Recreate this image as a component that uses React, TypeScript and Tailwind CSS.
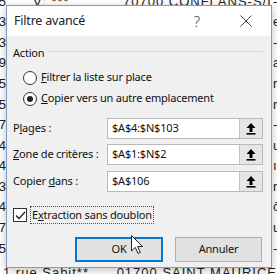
import React from 'react';

const rows = [
  { left: '35', mid: 'V: ***', mid2: '70700 CONFLANS-S/L', right: '-c' },
  { left: '53', mid: '', mid2: '', right: 'ef' },
  { left: '93', mid: '', mid2: '', right: '-c' },
  { left: '39', mid: '', mid2: '', right: 'a' },
  { left: '65', mid: '', mid2: '', right: 'r' },
  { left: '45', mid: '', mid2: '', right: 'r:' },
  { left: '17', mid: '', mid2: '', right: '-c' },
  { left: '24', mid: '', mid2: '', right: 'u' },
  { left: '14', mid: '', mid2: '', right: 'ır' },
  { left: '23', mid: '', mid2: '', right: 'r' },
  { left: '74', mid: '', mid2: '', right: 'ô' },
  { left: '67', mid: '', mid2: '', right: 'u' },
  { left: '15', mid: '', mid2: '', right: '-c' },
];

const UpButton = () => (
  <div className="w-[23px] h-full bg-[#e6e6e6] border-l border-[#c4c4c4] flex items-center justify-center">
    <svg width="10" height="12" viewBox="0 0 10 12">
      <path d="M5 0 L9.5 5 L6.5 5 L6.5 9 L3.5 9 L3.5 5 L0.5 5 Z" fill="#000" />
      <rect x="0.5" y="10" width="9" height="1.6" fill="#000" />
    </svg>
  </div>
);

const Field = ({ label, value, className }: { label: React.ReactNode; value: string; className?: string }) => (
  <div className={`flex items-center h-[21px] ${className ?? ''}`}>
    <div className="w-[94px] shrink-0">{label}</div>
    <div className="flex-1 h-full flex bg-white border border-[#b9b9b9]">
      <div className="flex-1 flex items-center pl-[4px]">{value}</div>
      <UpButton />
    </div>
  </div>
);

const Radio = ({ checked, children }: { checked?: boolean; children: React.ReactNode }) => (
  <div className="flex items-center h-[21px] pl-[10px]">
    <div className="w-[14px] h-[14px] rounded-full border border-[#333] bg-white flex items-center justify-center">
      {checked && <div className="w-[6px] h-[6px] rounded-full bg-[#222]" />}
    </div>
    <span className="ml-[4px]">{children}</span>
  </div>
);

export default function App() {
  return (
    <div className="relative w-[277px] h-[274px] overflow-hidden bg-white" style={{ fontFamily: '"Liberation Sans", Arial, sans-serif' }}>
      {/* spreadsheet behind */}
      <div className="flex flex-col -mt-[9px] text-[13px] text-[#222]">
        {rows.map((r, i) => (
          <div key={i} className="h-[20.6px] flex items-center whitespace-nowrap">
            <div className="w-[6px] overflow-hidden flex justify-end"><span>{r.left}</span></div>
            <div className="w-[117px] pl-[27px] tracking-[1px]">{r.mid}</div>
            <div className="w-[149px] overflow-hidden tracking-[1px]">{r.mid2}</div>
            <div className="w-[5px] overflow-hidden pl-[1px]">{r.right}</div>
          </div>
        ))}
        <div className="h-[20.6px] pt-[7px] flex items-center whitespace-nowrap">
          <div className="w-[123px] pl-[3px] tracking-[1px]">1 rue Sabit**</div>
          <div className="tracking-[1px]">01700 SAINT MAURICE</div>
        </div>
      </div>

      {/* dialog window */}
      <div
        className="absolute left-[6px] top-[5px] w-[266px] h-[263px] border border-[#7f9dc4] bg-[#f0f0f0] shadow-[0_2px_8px_rgba(0,0,0,0.25)] flex flex-col text-[11px] tracking-[-0.2px] text-[#111]"
        style={{ fontFamily: '"Noto Sans", "Segoe UI", sans-serif' }}
      >
        <div className="h-[30px] bg-white flex items-center shrink-0">
          <span className="pl-[7px] text-[12.5px] text-[#222]">Filtre avancé</span>
          <span className="ml-auto mr-[40px] text-[15px] font-light text-[#444]">?</span>
          <svg className="mr-[19px]" width="12" height="12" viewBox="0 0 12 12">
            <path d="M0.5 0.5 L11.5 11.5 M11.5 0.5 L0.5 11.5" stroke="#444" strokeWidth="1" />
          </svg>
        </div>

        <div className="flex-1 flex flex-col pl-[6px] pr-[8px] pt-[8px]">
          <div className="h-[18px] flex items-center">
            <span>Action</span>
            <div className="flex-1 h-px bg-[#d5d5d5] ml-[4px] -mt-[3px]" />
          </div>
          <div className="mt-[5px]">
            <Radio><span className="underline">F</span>iltrer la liste sur place</Radio>
            <Radio checked><span className="underline">C</span>opier vers un autre emplacement</Radio>
          </div>

          <Field className="mt-[9px]" label={<>P<span className="underline">l</span>ages :</>} value="$A$4:$N$103" />
          <Field className="mt-[5px]" label={<><span className="underline">Z</span>one de critères :</>} value="$A$1:$N$2" />
          <Field className="mt-[6px]" label={<>Copier <span className="underline">d</span>ans :</>} value="$A$106" />

          <div className="mt-[14px] h-[18px] flex items-center">
            <div className="w-[14px] h-[14px] border border-[#333] bg-white flex items-center justify-center">
              <svg width="11" height="9" viewBox="0 0 11 9">
                <path d="M1 4.5 L4 7.5 L10 1" stroke="#222" strokeWidth="1.3" fill="none" />
              </svg>
            </div>
            <span className="ml-[3px] px-[1px] border border-dotted border-[#555]">
              E<span className="underline">x</span>traction sans doublon
            </span>
          </div>

          <div className="mt-[13px] flex justify-end gap-[12px] pr-[1px]">
            <button className="w-[88px] h-[25px] bg-[#e1e1e1] border-2 border-[#0078d7] text-[#111]">OK</button>
            <button className="w-[87px] h-[25px] bg-[#e1e1e1] border border-[#adadad] text-[#111]">Annuler</button>
          </div>
        </div>
      </div>

      {/* mouse cursor */}
      <svg className="absolute left-[131px] top-[235px]" width="13" height="20" viewBox="0 0 13 20">
        <path d="M0.5 0.5 L0.5 16 L4.3 12.4 L7 18.5 L9.3 17.5 L6.7 11.5 L11.5 11.5 Z" fill="#fff" stroke="#222" strokeWidth="1" />
      </svg>
    </div>
  );
}
